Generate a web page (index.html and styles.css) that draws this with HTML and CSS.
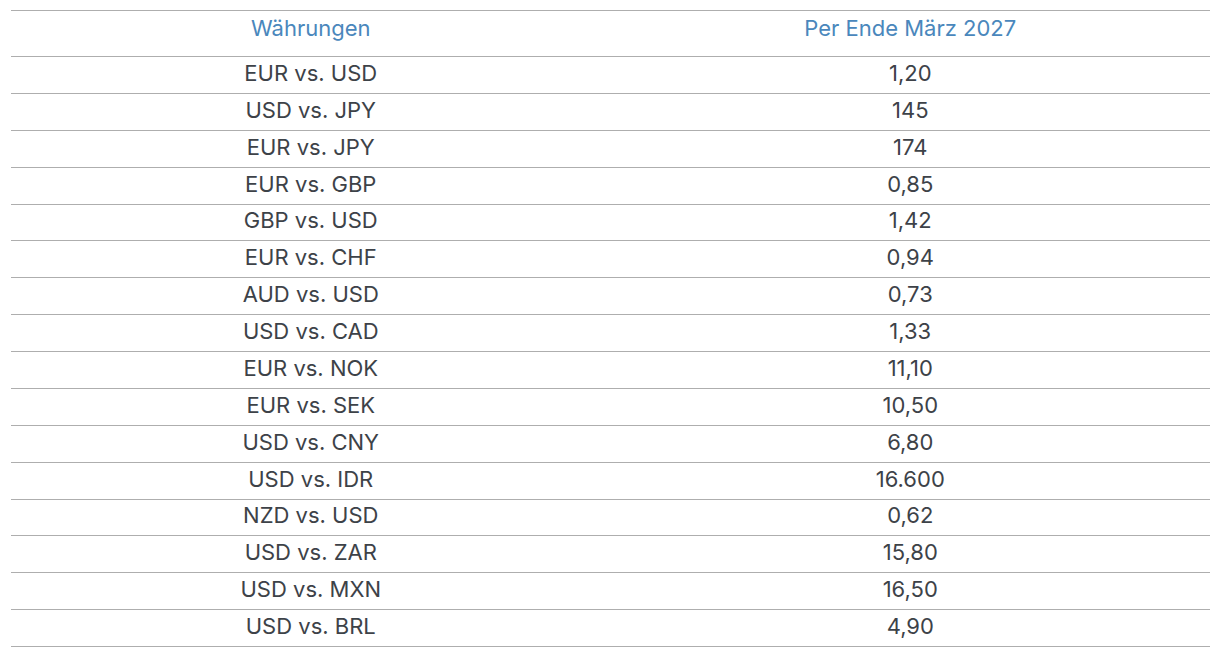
FILE: index.html
```html
<!DOCTYPE html>
<html lang="de">
<head>
<meta charset="utf-8">
<title>Währungsprognosen</title>
<link rel="stylesheet" href="styles.css">
</head>
<body>
<div class="fx-table">
  <div class="fx-row fx-head">
    <div class="fx-cell">Währungen</div>
    <div class="fx-cell">Per Ende März 2027</div>
  </div>
  <div class="fx-row"><div class="fx-cell">EUR vs. USD</div><div class="fx-cell">1,20</div></div>
  <div class="fx-row"><div class="fx-cell">USD vs. JPY</div><div class="fx-cell">145</div></div>
  <div class="fx-row"><div class="fx-cell">EUR vs. JPY</div><div class="fx-cell">174</div></div>
  <div class="fx-row"><div class="fx-cell">EUR vs. GBP</div><div class="fx-cell">0,85</div></div>
  <div class="fx-row"><div class="fx-cell">GBP vs. USD</div><div class="fx-cell">1,42</div></div>
  <div class="fx-row"><div class="fx-cell">EUR vs. CHF</div><div class="fx-cell">0,94</div></div>
  <div class="fx-row"><div class="fx-cell">AUD vs. USD</div><div class="fx-cell">0,73</div></div>
  <div class="fx-row"><div class="fx-cell">USD vs. CAD</div><div class="fx-cell">1,33</div></div>
  <div class="fx-row"><div class="fx-cell">EUR vs. NOK</div><div class="fx-cell">11,10</div></div>
  <div class="fx-row"><div class="fx-cell">EUR vs. SEK</div><div class="fx-cell">10,50</div></div>
  <div class="fx-row"><div class="fx-cell">USD vs. CNY</div><div class="fx-cell">6,80</div></div>
  <div class="fx-row"><div class="fx-cell">USD vs. IDR</div><div class="fx-cell">16.600</div></div>
  <div class="fx-row"><div class="fx-cell">NZD vs. USD</div><div class="fx-cell">0,62</div></div>
  <div class="fx-row"><div class="fx-cell">USD vs. ZAR</div><div class="fx-cell">15,80</div></div>
  <div class="fx-row"><div class="fx-cell">USD vs. MXN</div><div class="fx-cell">16,50</div></div>
  <div class="fx-row"><div class="fx-cell">USD vs. BRL</div><div class="fx-cell">4,90</div></div>
</div>
</body>
</html>
```

FILE: styles.css
```css
html, body {
  margin: 0;
  padding: 0;
  background: #ffffff;
}
body {
  padding: 10px 15px 0 11px;
  font-family: Inter, "Noto Sans", sans-serif;
  font-size: 22px;
  color: #3d4248;
}
.fx-table {
  display: flex;
  flex-direction: column;
  border-top: 1px solid #aeaeae;
}
.fx-row {
  display: grid;
  grid-template-columns: 1fr 1fr;
  align-items: center;
  box-sizing: border-box;
  height: 36.875px;
  padding-bottom: 4px;
  border-bottom: 1px solid #aeaeae;
}
.fx-head {
  height: 46px;
  align-items: start;
  padding: 6px 0 0;
  color: #4a87bc;
}
.fx-cell {
  text-align: center;
  line-height: 1;
}
```
